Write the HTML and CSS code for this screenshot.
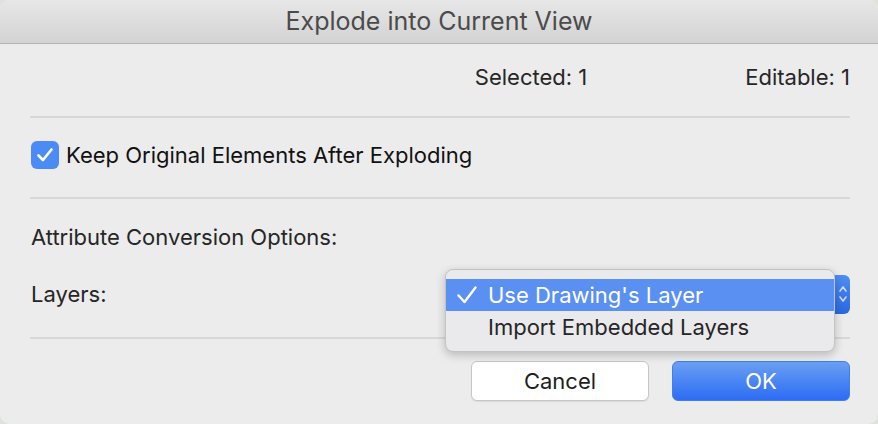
FILE: index.html
```html
<!doctype html>
<html>
  <head>
    <title>Explode into Current View</title>
    <link rel="stylesheet" href="styles.css">
  </head>
  <body>
    <div class="window">
      <div class="titlebar">Explode into Current View</div>

      <div class="content">
        <div class="row stats">
          <span class="stat-selected">Selected: 1</span>
          <span>Editable: 1</span>
        </div>
        <hr class="sep">

        <label class="row check-row">
          <span class="checkbox">
            <svg width="18" height="16" viewBox="0 0 18 16"><path d="M2.5 8.5 L7 13 L15.5 2.5" fill="none" stroke="#fff" stroke-width="2.6" stroke-linecap="round" stroke-linejoin="round"/></svg>
          </span>
          <span class="check-label">Keep Original Elements After Exploding</span>
        </label>
        <hr class="sep">

        <div class="row attr-title">Attribute Conversion Options:</div>

        <div class="row layers-row">
          <span>Layers:</span>
          <div class="popup-btn">
            <svg width="10" height="22" viewBox="0 0 10 22"><path d="M2 8 L5 4 L8 8 M2 14 L5 18 L8 14" fill="none" stroke="rgba(255,255,255,0.75)" stroke-width="1.6" stroke-linecap="round" stroke-linejoin="round"/></svg>
          </div>
        </div>
        <hr class="sep">

        <div class="buttons">
          <button class="btn btn-cancel">Cancel</button>
          <button class="btn btn-ok">OK</button>
        </div>
      </div>

      <div class="menu">
        <div class="menu-item selected">
          <svg class="tick" width="20" height="18" viewBox="0 0 20 18"><path d="M1.5 9.5 L7.5 16 L18.5 1.5" fill="none" stroke="#fff" stroke-width="2.4" stroke-linecap="round" stroke-linejoin="round"/></svg>
          Use Drawing's Layer
        </div>
        <div class="menu-item"><span class="tick"></span>Import Embedded Layers</div>
      </div>
    </div>
  </body>
</html>
```

FILE: styles.css
```css
html { background: #dfe3dc; }
body {
  margin: 0;
  font-family: Inter, "Liberation Sans", sans-serif;
  color: #262626;
}
.window {
  position: relative;
  width: 878px;
  height: 424px;
  background: #ececec;
  border-radius: 10px;
  overflow: hidden;
}
.titlebar {
  height: 43px;
  line-height: 43px;
  text-align: center;
  font-size: 25px;
  color: #4b4b4b;
  background: linear-gradient(#e7e7e7, #d3d3d3);
  border-bottom: 1px solid #b3b3b3;
}
.content { padding: 0 28px 0 30px; }
.row {
  display: flex;
  align-items: center;
  height: 40px;
  font-size: 22px;
  padding-left: 1px;
}
.sep {
  margin: 0;
  border: none;
  border-top: 2px solid #d7d7d7;
}
.stats {
  justify-content: flex-end;
  margin: 13px 0 19px;
}
.stat-selected { margin-right: 158px; }
.check-row { margin: 17px 0 22px; color: #111; }
.checkbox {
  width: 28px;
  height: 28px;
  border-radius: 6px;
  background: #4b8bf5;
  display: flex;
  align-items: center;
  justify-content: center;
  margin-right: 7px;
}
.attr-title { margin-top: 18px; }
.layers-row {
  margin: 17px 0 23px;
  justify-content: space-between;
}
.popup-btn {
  width: 390px;
  height: 39px;
  border-radius: 6px;
  background: linear-gradient(#4f8ef4, #2a68e0);
  display: flex;
  align-items: center;
  justify-content: flex-end;
  padding-right: 2px;
  box-sizing: border-box;
}
.buttons {
  display: flex;
  justify-content: flex-end;
  gap: 23px;
  margin-top: 22px;
}
.btn {
  width: 178px;
  height: 40px;
  border-radius: 6px;
  font-family: inherit;
  font-size: 22px;
}
.btn-cancel {
  background: #fff;
  border: 1px solid #c6c6c6;
  color: #1e1e1e;
  box-shadow: 0 1px 1px rgba(0, 0, 0, 0.08);
}
.btn-ok {
  background: linear-gradient(#6a9ff2, #2d6cf4);
  border: 1px solid #3f7ef0;
  color: #fff;
}
.menu {
  position: absolute;
  left: 445px;
  top: 269px;
  width: 390px;
  padding: 9px 0 8px;
  background: #eaeaec;
  border: 1px solid #c3c3c3;
  border-radius: 8px;
  box-shadow: 0 3px 10px rgba(0, 0, 0, 0.22);
  box-sizing: border-box;
  font-size: 22px;
}
.menu-item {
  display: flex;
  align-items: center;
  height: 32px;
  padding-left: 11px;
  color: #262626;
}
.menu-item.selected {
  background: #5a90f1;
  color: #fff;
}
.tick {
  width: 20px;
  margin-right: 11px;
  flex-shrink: 0;
}
```
